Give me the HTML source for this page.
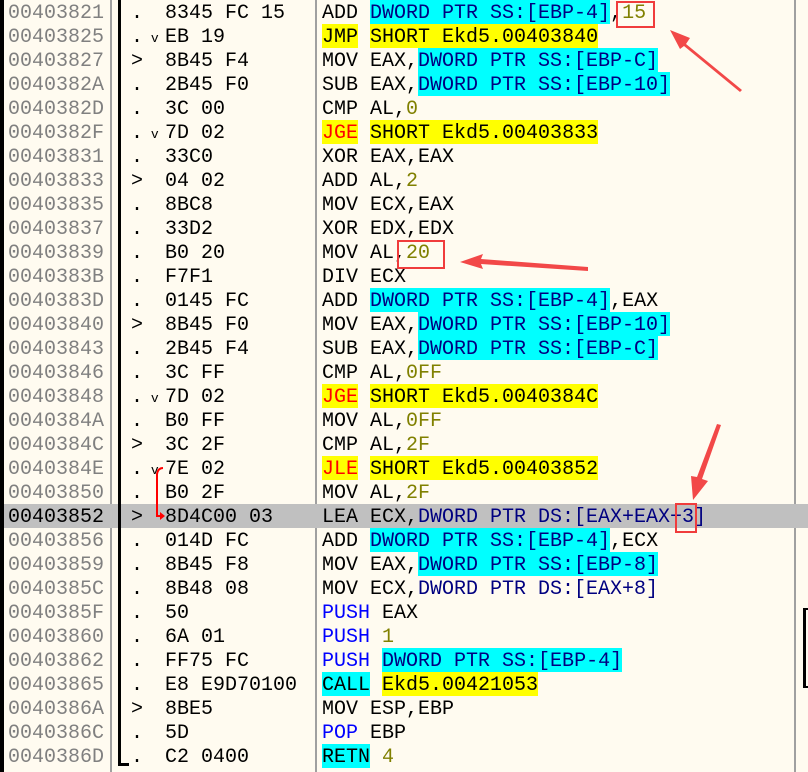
<!DOCTYPE html>
<html><head><meta charset="utf-8"><style>
body{margin:0;width:808px;height:772px;overflow:hidden;background:#fffbf0;position:relative;font-family:"Liberation Mono",monospace;font-size:20px;}
.r{position:absolute;left:0;width:808px;height:24px;line-height:24px;white-space:pre;}
.r span{display:inline-block;}
.a,.d,.h,.m{top:2px;}
.a{position:absolute;left:8px;color:#808080;}
.d{position:absolute;left:131px;color:#000;}
.h{position:absolute;left:165px;color:#000;}
.m{position:absolute;left:322px;color:#000;}
.m span{line-height:24px;margin-top:-2px;padding-top:2px;height:22px;vertical-align:top;}
.c{background:#00ffff;color:#000080;}
.y{background:#ffff00;}
.n{color:#000080;}
.o{color:#808000;}
.b{color:#0000ff;}
.rd{color:#ff0000;}
.sel{background:#c0c0c0;}
.sel .a{color:#000;}
.v{font-size:13px;}
</style></head><body>
<div style="position:absolute;left:0;top:0;width:4px;height:772px;background:#000"></div>
<div style="position:absolute;left:110px;top:0;width:2px;height:772px;background:#a0a0a0"></div>
<div style="position:absolute;left:315px;top:0;width:2px;height:772px;background:#a0a0a0"></div>
<div style="position:absolute;left:794px;top:0;width:2px;height:772px;background:#a0a0a0"></div>

<div class="r" style="top:0"><span class="a">00403821</span><span class="d">.</span><span class="h">8345 FC 15</span><span class="m">ADD <span class="c">DWORD PTR SS:[EBP-4]</span>,<span class="o">15</span></span></div>
<div class="r" style="top:24px"><span class="a">00403825</span><span class="d">.<span class="v"> v</span></span><span class="h">EB 19</span><span class="m"><span class="y">JMP</span> <span class="y">SHORT Ekd5.00403840</span></span></div>
<div class="r" style="top:48px"><span class="a">00403827</span><span class="d">&gt;</span><span class="h">8B45 F4</span><span class="m">MOV EAX,<span class="c">DWORD PTR SS:[EBP-C]</span></span></div>
<div class="r" style="top:72px"><span class="a">0040382A</span><span class="d">.</span><span class="h">2B45 F0</span><span class="m">SUB EAX,<span class="c">DWORD PTR SS:[EBP-10]</span></span></div>
<div class="r" style="top:96px"><span class="a">0040382D</span><span class="d">.</span><span class="h">3C 00</span><span class="m">CMP AL,<span class="o">0</span></span></div>
<div class="r" style="top:120px"><span class="a">0040382F</span><span class="d">.<span class="v"> v</span></span><span class="h">7D 02</span><span class="m"><span class="y rd">JGE</span> <span class="y">SHORT Ekd5.00403833</span></span></div>
<div class="r" style="top:144px"><span class="a">00403831</span><span class="d">.</span><span class="h">33C0</span><span class="m">XOR EAX,EAX</span></div>
<div class="r" style="top:168px"><span class="a">00403833</span><span class="d">&gt;</span><span class="h">04 02</span><span class="m">ADD AL,<span class="o">2</span></span></div>
<div class="r" style="top:192px"><span class="a">00403835</span><span class="d">.</span><span class="h">8BC8</span><span class="m">MOV ECX,EAX</span></div>
<div class="r" style="top:216px"><span class="a">00403837</span><span class="d">.</span><span class="h">33D2</span><span class="m">XOR EDX,EDX</span></div>
<div class="r" style="top:240px"><span class="a">00403839</span><span class="d">.</span><span class="h">B0 20</span><span class="m">MOV AL,<span class="o">20</span></span></div>
<div class="r" style="top:264px"><span class="a">0040383B</span><span class="d">.</span><span class="h">F7F1</span><span class="m">DIV ECX</span></div>
<div class="r" style="top:288px"><span class="a">0040383D</span><span class="d">.</span><span class="h">0145 FC</span><span class="m">ADD <span class="c">DWORD PTR SS:[EBP-4]</span>,EAX</span></div>
<div class="r" style="top:312px"><span class="a">00403840</span><span class="d">&gt;</span><span class="h">8B45 F0</span><span class="m">MOV EAX,<span class="c">DWORD PTR SS:[EBP-10]</span></span></div>
<div class="r" style="top:336px"><span class="a">00403843</span><span class="d">.</span><span class="h">2B45 F4</span><span class="m">SUB EAX,<span class="c">DWORD PTR SS:[EBP-C]</span></span></div>
<div class="r" style="top:360px"><span class="a">00403846</span><span class="d">.</span><span class="h">3C FF</span><span class="m">CMP AL,<span class="o">0FF</span></span></div>
<div class="r" style="top:384px"><span class="a">00403848</span><span class="d">.<span class="v"> v</span></span><span class="h">7D 02</span><span class="m"><span class="y rd">JGE</span> <span class="y">SHORT Ekd5.0040384C</span></span></div>
<div class="r" style="top:408px"><span class="a">0040384A</span><span class="d">.</span><span class="h">B0 FF</span><span class="m">MOV AL,<span class="o">0FF</span></span></div>
<div class="r" style="top:432px"><span class="a">0040384C</span><span class="d">&gt;</span><span class="h">3C 2F</span><span class="m">CMP AL,<span class="o">2F</span></span></div>
<div class="r" style="top:456px"><span class="a">0040384E</span><span class="d">.<span class="v"> v</span></span><span class="h">7E 02</span><span class="m"><span class="y rd">JLE</span> <span class="y">SHORT Ekd5.00403852</span></span></div>
<div class="r" style="top:480px"><span class="a">00403850</span><span class="d">.</span><span class="h">B0 2F</span><span class="m">MOV AL,<span class="o">2F</span></span></div>
<div class="r sel" style="top:504px;left:4px;width:804px"><span class="a" style="left:4px">00403852</span><span class="d" style="left:127px">&gt;</span><span class="h" style="left:161px">8D4C00 03</span><span class="m" style="left:318px">LEA ECX,<span class="n">DWORD PTR DS:[EAX+EAX+3]</span></span></div>
<div class="r" style="top:528px"><span class="a">00403856</span><span class="d">.</span><span class="h">014D FC</span><span class="m">ADD <span class="c">DWORD PTR SS:[EBP-4]</span>,ECX</span></div>
<div class="r" style="top:552px"><span class="a">00403859</span><span class="d">.</span><span class="h">8B45 F8</span><span class="m">MOV EAX,<span class="c">DWORD PTR SS:[EBP-8]</span></span></div>
<div class="r" style="top:576px"><span class="a">0040385C</span><span class="d">.</span><span class="h">8B48 08</span><span class="m">MOV ECX,<span class="n">DWORD PTR DS:[EAX+8]</span></span></div>
<div class="r" style="top:600px"><span class="a">0040385F</span><span class="d">.</span><span class="h">50</span><span class="m"><span class="b">PUSH</span> EAX</span></div>
<div class="r" style="top:624px"><span class="a">00403860</span><span class="d">.</span><span class="h">6A 01</span><span class="m"><span class="b">PUSH</span> <span class="o">1</span></span></div>
<div class="r" style="top:648px"><span class="a">00403862</span><span class="d">.</span><span class="h">FF75 FC</span><span class="m"><span class="b">PUSH</span> <span class="c">DWORD PTR SS:[EBP-4]</span></span></div>
<div class="r" style="top:672px"><span class="a">00403865</span><span class="d">.</span><span class="h">E8 E9D70100</span><span class="m"><span class="c" style="color:#000">CALL</span> <span class="y">Ekd5.00421053</span></span></div>
<div class="r" style="top:696px"><span class="a">0040386A</span><span class="d">&gt;</span><span class="h">8BE5</span><span class="m">MOV ESP,EBP</span></div>
<div class="r" style="top:720px"><span class="a">0040386C</span><span class="d">.</span><span class="h">5D</span><span class="m"><span class="b">POP</span> EBP</span></div>
<div class="r" style="top:744px"><span class="a">0040386D</span><span class="d">.</span><span class="h">C2 0400</span><span class="m"><span class="c" style="color:#000">RETN</span> <span class="o">4</span></span></div>

<div style="position:absolute;left:118px;top:0;width:3px;height:766px;background:#000"></div>
<div style="position:absolute;left:118px;top:763px;width:11px;height:3px;background:#000"></div>
<div style="position:absolute;left:803px;top:608px;width:3px;height:80px;background:#000"></div>
<div style="position:absolute;left:803px;top:608px;width:5px;height:2px;background:#000"></div>
<div style="position:absolute;left:803px;top:686px;width:5px;height:2px;background:#000"></div>

<svg width="808" height="772" style="position:absolute;left:0;top:0">
<path d="M163 468 Q158 468 157 474 L157 516 L162 516" fill="none" stroke="#f00" stroke-width="2"/>
<path d="M160 512 L165 516 L160 520 Z" fill="#f00"/>
<g fill="none" stroke="#f03c3c" stroke-width="2">
<rect x="617" y="2" width="37" height="25"/>
<rect x="398" y="241" width="46" height="27"/>
<rect x="676" y="504" width="20" height="28"/>
</g>
<g fill="#f24848">
<path d="M742 90 L686 44 L690 38 L670 30 L680 49 L684 46 L740 92 Z"/>
<path d="M588 271 L481 264 L483 269 L460 262 L483 254 L481 259 L588 267 Z"/>
<path d="M721 425 L702 479 L708 481 L693 500 L691 476 L697 477 L717 424 Z"/>
</g>
</svg>
</body></html>
